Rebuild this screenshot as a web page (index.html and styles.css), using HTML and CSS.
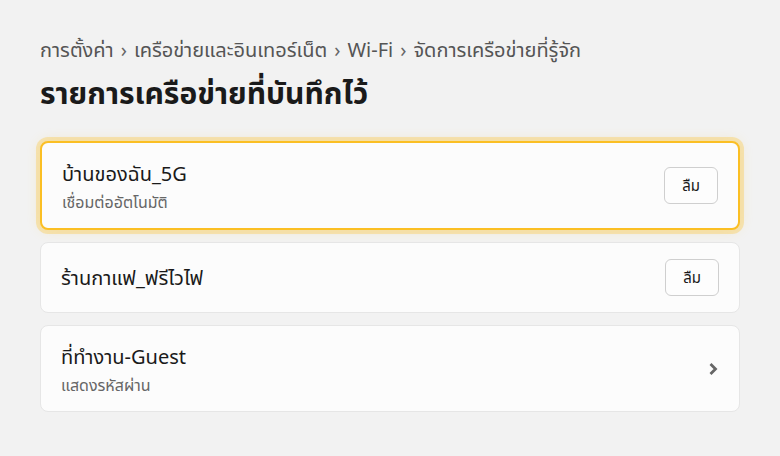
FILE: index.html
```html
<!DOCTYPE html>
<html lang="th">
<head>
<meta charset="utf-8">
<title>รายการเครือข่ายที่บันทึกไว้</title>
<link rel="stylesheet" href="styles.css">
</head>
<body>
<main class="page">
  <nav class="crumbs">
    <span>การตั้งค่า</span><span class="sep">›</span><span>เครือข่ายและอินเทอร์เน็ต</span><span class="sep">›</span><span>Wi-Fi</span><span class="sep">›</span><span>จัดการเครือข่ายที่รู้จัก</span>
  </nav>
  <h1 class="title">รายการเครือข่ายที่บันทึกไว้</h1>
  <ul class="list">
    <li class="card card-active">
      <div class="info">
        <div class="name">บ้านของฉัน_5G</div>
        <div class="sub">เชื่อมต่ออัตโนมัติ</div>
      </div>
      <button class="btn">ลืม</button>
    </li>
    <li class="card">
      <div class="info">
        <div class="name">ร้านกาแฟ_ฟรีไวไฟ</div>
      </div>
      <button class="btn">ลืม</button>
    </li>
    <li class="card">
      <div class="info">
        <div class="name">ที่ทำงาน-Guest</div>
        <div class="sub">แสดงรหัสผ่าน</div>
      </div>
      <svg class="chev" width="10" height="14" viewBox="0 0 10 14" aria-hidden="true"><path d="M2.5 2 L7.5 7 L2.5 12" fill="none" stroke="#666" stroke-width="2.8" stroke-linecap="butt" stroke-linejoin="miter"/></svg>
    </li>
  </ul>
</main>
</body>
</html>
```
FILE: styles.css
```css
html, body {
  margin: 0;
  padding: 0;
  background: #f2f2f2;
}
body {
  font-family: "Noto Sans", "Noto Sans Thai", sans-serif;
  color: #1a1a1a;
}
.page {
  padding: 36px 40px 20px 40px;
}
.crumbs {
  font-size: 20px;
  line-height: 28px;
  color: #555;
  display: flex;
  gap: 7px;
}
.crumbs .sep {
  color: #666;
}
.title {
  margin: 9px 0 0 0;
  font-size: 30px;
  line-height: 40px;
  font-weight: 700;
  color: #1a1a1a;
}
.list {
  list-style: none;
  margin: 28px 0 0 0;
  padding: 0;
  display: flex;
  flex-direction: column;
  gap: 12px;
}
.card {
  display: flex;
  align-items: center;
  justify-content: space-between;
  background: #fcfcfc;
  border: 1px solid #e6e6e6;
  border-radius: 8px;
  padding: 16px 20px;
}
.card-active {
  border: 2px solid #fbbf24;
  box-shadow: 0 0 0 4px rgba(251, 191, 36, 0.3), 0 0 14px rgba(251, 191, 36, 0.2);
}
.info {
  display: flex;
  flex-direction: column;
  gap: 4px;
}
.name {
  font-size: 20px;
  line-height: 29px;
  color: #1a1a1a;
}
.sub {
  font-size: 16px;
  line-height: 20px;
  color: #666;
}
.btn {
  font-family: inherit;
  font-size: 15px;
  line-height: 21px;
  padding: 7px 17px;
  background: #fdfdfd;
  color: #1a1a1a;
  border: 1px solid #cfcfcf;
  border-radius: 6px;
}
.chev {
  display: block;
  margin-right: 1px;
}
```
